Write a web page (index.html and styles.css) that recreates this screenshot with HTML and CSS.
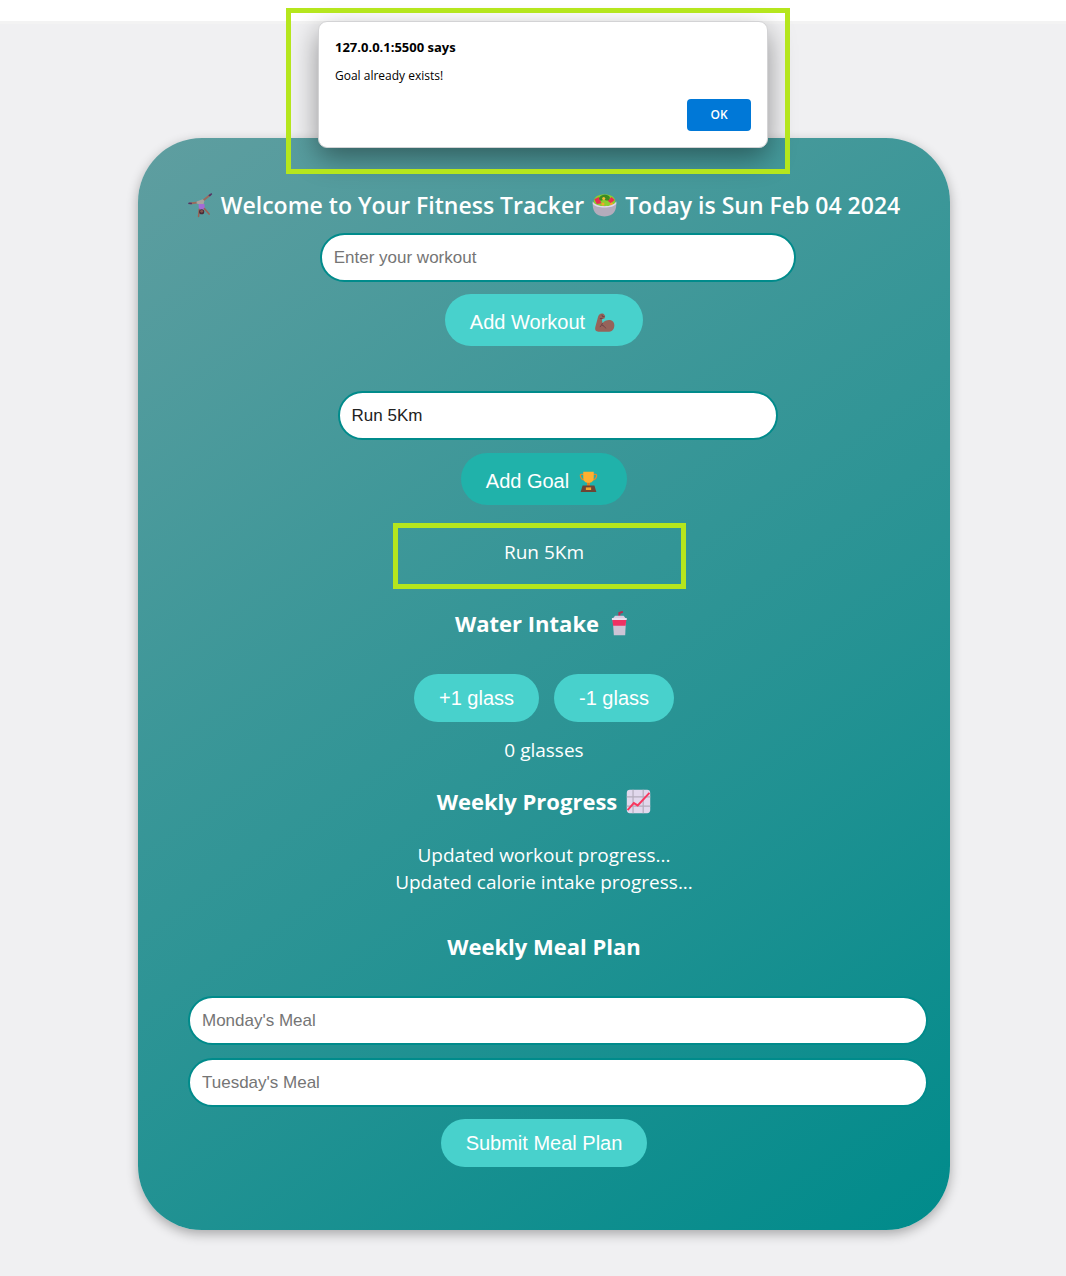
FILE: index.html
```html
<!DOCTYPE html>
<html lang="en">
<head>
<meta charset="utf-8">
<meta name="viewport" content="width=device-width, initial-scale=1">
<title>Fitness Tracker</title>
<link rel="stylesheet" href="styles.css">
</head>
<body>
<div class="toolbar"></div>
<div class="page">
  <main class="card">
    <h1 class="title">
      <svg class="emoji" viewBox="0 0 32 32" aria-hidden="true">
        <path d="M2 13.500 14 12M19 10 29 2" stroke="#9a6a5c" stroke-width="2.500"/>
        <path d="M0 14 1 12 5 12.500 5 14.500ZM26 3 30 0 31 1.500 28 4.500Z" fill="#533566"/>
        <path d="M11 11 19 8 21 10 20 14H13L11 13.500Z" fill="#a9a39f"/>
        <path d="M13.500 14H21L21.500 21H14Z" fill="#a56bd6"/>
        <path d="M14.500 21 13.500 30M21 20 27 27" stroke="#9a6255" stroke-width="2" stroke-linecap="round"/>
        <circle cx="17.500" cy="24" r="3.300" fill="#4a2b37"/><circle cx="17.500" cy="23.500" r="1.800" fill="#85564c"/>
      </svg>
      <span>Welcome to Your Fitness Tracker</span>
      <svg class="emoji" viewBox="0 0 32 32" aria-hidden="true">
        <path d="M2 12C2 5 8 2 16 2S30 5 30 12L27 18H5Z" fill="#8ccf2d"/>
        <path d="M3 8 9 5 12 13 6 14ZM20 10 25 5 29 9 24 13Z" fill="#e92c50"/>
        <path d="M9 7C10 2 21 0 23 6C22 11 18 10 15 8C12 11 10 10 9 7Z" fill="#3c8b20"/>
        <circle cx="15" cy="7" r="2" fill="#f5b938"/><circle cx="14" cy="14" r="2" fill="#f5a62b"/><circle cx="25" cy="14" r="2" fill="#f5a62b"/>
        <path d="M1 11C4 19 28 19 31 11C32 22 28 30 16 30S0 22 1 11Z" fill="#b4acbc"/>
        <path d="M1 11C4 19 28 19 31 11V14C26 20 6 20 1 14Z" fill="#e3d9ea"/>
      </svg>
      <span>Today is Sun Feb 04 2024</span>
    </h1>

    <form class="entry workout">
      <input class="field" type="text" placeholder="Enter your workout" aria-label="Workout">
      <button class="btn with-icon" type="button">Add Workout
        <svg class="icon" viewBox="0 0 32 32" aria-hidden="true">
          <path d="M6 8C7 3 11 1 15 3L17 6 16 10 12 11 13 17C18 10 31 10 31 20C31 27 27 30 21 30H7C3 30 1 28 2 23Z" fill="#96635a"/>
          <path d="M12 4 13 7 16 7M9 10 13 10M13 17C12 19 11 21 9 23M12 20C14 20 17 23 18 25" fill="none" stroke="#6b4247" stroke-width="1.500"/>
        </svg>
      </button>
    </form>

    <form class="entry goal">
      <input class="field" type="text" value="Run 5Km" aria-label="Goal">
      <button class="btn with-icon active" type="button">Add Goal
        <svg class="icon" viewBox="0 0 32 32" aria-hidden="true">
          <path d="M9 5H5Q3 5 4 9Q5 13 10 14M23 5H27Q29 5 28 9Q27 13 22 14" fill="none" stroke="#e08a2c" stroke-width="2"/>
          <path d="M8 1H24V10Q24 17 18 18V22H14V18Q8 17 8 10Z" fill="#ffb02e"/>
          <path d="M14 18H18V23H14Z" fill="#d67d27"/>
          <path d="M7 22H25L28 32H4Z" fill="#6d4534"/>
          <path d="M12 25H20V29H12Z" fill="#f3a62c"/>
        </svg>
      </button>
    </form>

    <div class="goal-list">
      <p class="text">Run 5Km</p>
      <div class="marker goal-marker"></div>
    </div>

    <section class="water">
      <h2 class="heading">Water Intake
        <svg class="emoji" viewBox="0 0 32 32" aria-hidden="true">
          <path d="M14.500 8V2.500L19 1" fill="none" stroke="#b92c51" stroke-width="2.500"/>
          <path d="M6 10 9 6H20L23 10Z" fill="#d8cde2"/>
          <path d="M6 11H23L22 31H7.500Z" fill="#cdc4d6"/>
          <path d="M5.500 11H23.500L22.500 19H6.500Z" fill="#ef3163"/>
          <path d="M5 9H24V11.500H5Z" fill="#e9e1ef"/>
        </svg>
      </h2>
      <div class="btn-row">
        <button class="btn" type="button">+1 glass</button>
        <button class="btn" type="button">-1 glass</button>
      </div>
      <p class="text">0 glasses</p>
    </section>

    <section class="progress">
      <h2 class="heading">Weekly Progress
        <svg class="emoji" viewBox="0 0 32 32" aria-hidden="true">
          <rect x="1" y="1" width="30" height="30" rx="4" fill="#e1d8ec"/>
          <path d="M9 1V31M22 1V31M1 10H31M1 22H31" stroke="#b4acbc" stroke-width="1.500"/>
          <path d="M2 27 10 18 15 21 30 5" fill="none" stroke="#f8375f" stroke-width="2.500"/>
        </svg>
      </h2>
      <p class="text">Updated workout progress...<br>Updated calorie intake progress...</p>
    </section>

    <form class="meals">
      <h2 class="heading">Weekly Meal Plan</h2>
      <div class="meal-fields">
        <input class="field" type="text" placeholder="Monday's Meal" aria-label="Monday's Meal">
        <input class="field" type="text" placeholder="Tuesday's Meal" aria-label="Tuesday's Meal">
      </div>
      <button class="btn" type="button">Submit Meal Plan</button>
    </form>
  </main>

  <div class="dialog" role="alertdialog" aria-labelledby="dialog-title" aria-describedby="dialog-text">
    <h2 class="dialog-title" id="dialog-title">127.0.0.1:5500 says</h2>
    <p class="dialog-text" id="dialog-text">Goal already exists!</p>
    <button class="dialog-ok" type="button">OK</button>
  </div>
  <div class="marker dialog-marker"></div>
</div>
</body>
</html>
```
FILE: styles.css
```css
* {
  box-sizing: border-box;
}

body {
  margin: 0;
  min-height: 100vh;
  background: #f0f0f2;
  font-family: "Open Sans", "Noto Sans", sans-serif;
  color: #fff;
}

h1, h2, p {
  margin: 0;
}

.toolbar {
  height: 24px;
  background: #fff;
  border-bottom: 3px solid #f3f3f3;
}

.page {
  position: relative;
  padding: 114px 116px 46px 138px;
}

.card {
  padding: 49px 50px 63px;
  border-radius: 64px;
  background: linear-gradient(145deg, #5f9ea0, #008b8b);
  box-shadow: 0 4px 12px rgba(0, 0, 0, 0.3);
  text-align: center;
}

.title {
  display: flex;
  align-items: center;
  justify-content: center;
  gap: 8px;
  font-size: 23px;
  line-height: 36px;
  font-weight: 600;
  white-space: nowrap;
}

.emoji {
  width: 25px;
  height: 25px;
  flex: none;
}

.icon {
  width: 21px;
  height: 21px;
}

/* Fields fill their form and extend past it by their own padding. */
.field {
  box-sizing: content-box;
  width: 100%;
  height: 21px;
  padding: 12px;
  border: 2px solid #008b8b;
  border-radius: 25px;
  background: #fff;
  color: #222;
  font: 17px/20px "Liberation Sans", Arial, sans-serif;
}

.field::placeholder {
  color: #757575;
}

.btn {
  height: 48px;
  padding: 0 25px;
  border: 0;
  border-radius: 26px;
  background: #48d1cc;
  color: #fff;
  font: 20px/24px "Liberation Sans", Arial, sans-serif;
  white-space: nowrap;
}

.with-icon {
  display: flex;
  align-items: center;
  gap: 9px;
  height: 52px;
  padding: 4px 28px 0 25px;
}

.active {
  background: #20b2aa;
}

.entry {
  display: flex;
  flex-direction: column;
  gap: 12px;
  margin: 10px auto 0;
}

.entry .btn {
  align-self: center;
}

.workout {
  width: 63%;
}

.goal {
  gap: 13px;
  width: 58%;
  margin-top: 45px;
}

.goal-list {
  position: relative;
  margin-top: 34px;
}

.text {
  font-size: 19px;
  line-height: 27px;
}

.heading {
  display: flex;
  align-items: center;
  justify-content: center;
  gap: 9px;
  font-size: 22px;
  line-height: 32px;
  font-weight: 700;
}

.water {
  margin-top: 41px;
}

.btn-row {
  display: flex;
  justify-content: center;
  gap: 15px;
  margin: 35px 0 15px;
}

.progress {
  margin-top: 21px;
}

.progress .text {
  margin-top: 25px;
}

.meals {
  margin-top: 34px;
}

.meal-fields {
  display: flex;
  flex-direction: column;
  gap: 13px;
  margin: 34px 0 12px;
}

.marker {
  position: absolute;
  border: 5px solid #b5e61d;
  pointer-events: none;
}

.goal-marker {
  top: -16px;
  left: calc(50% - 151px);
  width: 293px;
  height: 66px;
}

.dialog-marker {
  top: -16px;
  left: calc(50% - 247px);
  width: 504px;
  height: 166px;
}

.dialog {
  position: absolute;
  top: -3px;
  left: calc(50% - 215px);
  display: flex;
  flex-direction: column;
  width: 450px;
  padding: 15px 16px 16px;
  border: 1px solid #d3d3d5;
  border-radius: 9px;
  background: #fff;
  box-shadow: 0 10px 28px rgba(0, 0, 0, 0.4);
  color: #000;
}

.dialog-title {
  font-size: 13px;
  line-height: 20px;
  font-weight: 700;
}

.dialog-text {
  margin-top: 9px;
  font-size: 12px;
  line-height: 20px;
}

.dialog-ok {
  align-self: flex-end;
  width: 64px;
  height: 32px;
  margin-top: 13px;
  border: 0;
  border-radius: 4px;
  background: #0078d7;
  color: #fff;
  font: 600 12px/16px "Open Sans", "Noto Sans", sans-serif;
}
```
